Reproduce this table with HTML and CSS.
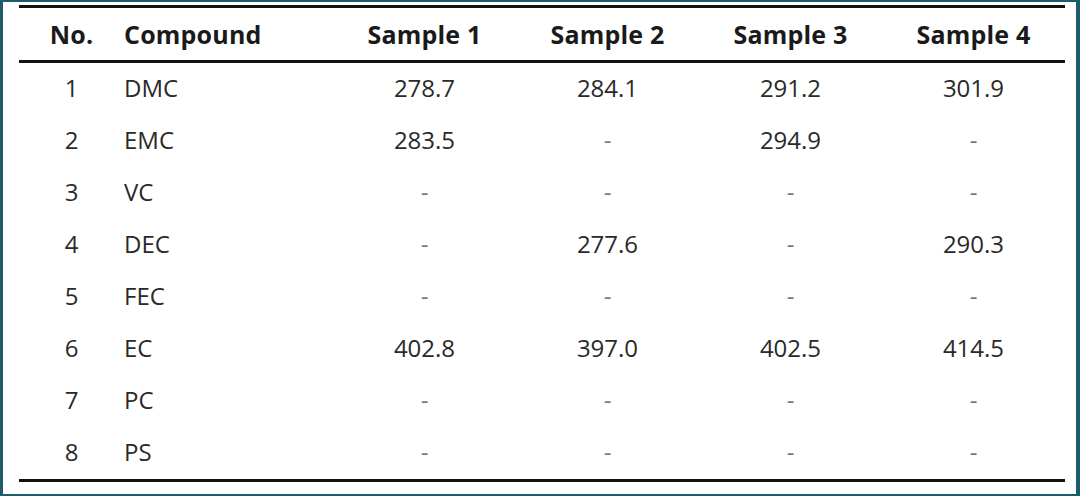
FILE: index.html
```html
<!DOCTYPE html>
<html lang="en">
<head>
  <meta charset="UTF-8" />
  <title>Compound Table</title>
  <link rel="stylesheet" href="styles.css">
</head>
<body>
  <!-- 外框 -->
  <div class="frame">
    <table class="data-table">
      <colgroup>
        <col class="col-no">
        <col class="col-name">
        <col class="col-val">
        <col class="col-val">
        <col class="col-val">
        <col class="col-val">
      </colgroup>
      <thead>
        <tr>
          <th class="center">No.</th>
          <th class="left">Compound</th>
          <th>Sample 1</th>
          <th>Sample 2</th>
          <th>Sample 3</th>
          <th>Sample 4</th>
        </tr>
      </thead>
      <tbody>
        <tr><td class="center">1</td><td class="left">DMC</td><td>278.7</td><td>284.1</td><td>291.2</td><td>301.9</td></tr>
        <tr><td class="center">2</td><td class="left">EMC</td><td>283.5</td><td class="dash">-</td><td>294.9</td><td class="dash">-</td></tr>
        <tr><td class="center">3</td><td class="left">VC</td><td class="dash">-</td><td class="dash">-</td><td class="dash">-</td><td class="dash">-</td></tr>
        <tr><td class="center">4</td><td class="left">DEC</td><td class="dash">-</td><td>277.6</td><td class="dash">-</td><td>290.3</td></tr>
        <tr><td class="center">5</td><td class="left">FEC</td><td class="dash">-</td><td class="dash">-</td><td class="dash">-</td><td class="dash">-</td></tr>
        <tr><td class="center">6</td><td class="left">EC</td><td>402.8</td><td>397.0</td><td>402.5</td><td>414.5</td></tr>
        <tr><td class="center">7</td><td class="left">PC</td><td class="dash">-</td><td class="dash">-</td><td class="dash">-</td><td class="dash">-</td></tr>
        <tr><td class="center">8</td><td class="left">PS</td><td class="dash">-</td><td class="dash">-</td><td class="dash">-</td><td class="dash">-</td></tr>
      </tbody>
    </table>
  </div>
</body>
</html>
```

FILE: styles.css
```css
/* 页面 */
body {
  margin: 0;
  padding: 0;
  background: #fff;
  font-family: "Open Sans", "Noto Sans", sans-serif;
}

/* 外框：青色边 */
.frame {
  width: 1080px;
  height: 496px;
  box-sizing: border-box;
  border-style: solid;
  border-color: #1e5c6c;
  border-width: 2px 4px 2px 3px;
  padding: 3px 0 0 16px;
  background: #fff;
}

/* 表格 */
.data-table {
  width: 1046px;
  border-collapse: collapse;
  table-layout: fixed;
  border-top: 3px solid #111;
  border-bottom: 3px solid #111;
  color: #222;
}
.col-no   { width: 105px; }
.col-name { width: 209px; }
.col-val  { width: 183px; }

.data-table th {
  height: 52px;
  padding: 0;
  font-size: 25px;
  font-weight: 700;
  letter-spacing: 0.2px;
  text-align: center;
  border-bottom: 3px solid #111;
  color: #1a1a1a;
}
.data-table td {
  height: 49px;
  padding: 0 0 3px 0;
  font-size: 24px;
  text-align: center;
  color: #2a2a2a;
}
.data-table .left   { text-align: left; }
.data-table .center { text-align: center; }
.data-table .dash   { color: #777; }
```
